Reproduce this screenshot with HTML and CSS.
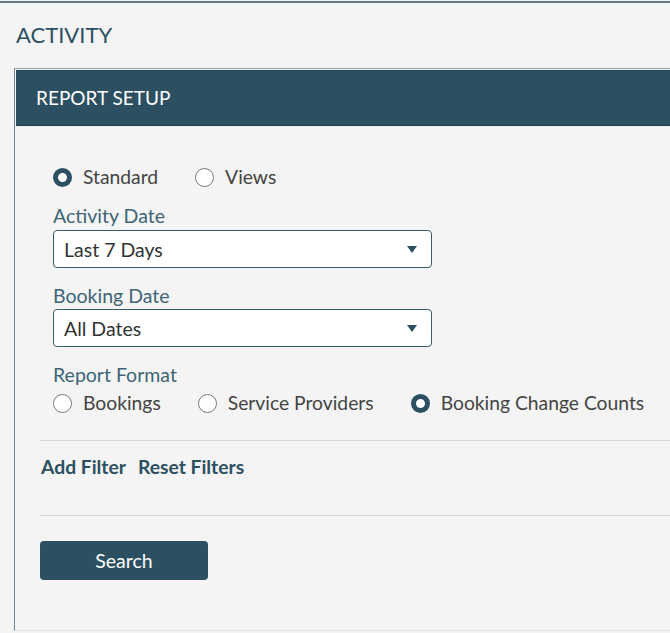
FILE: index.html
```html
<!DOCTYPE html>
<html lang="en">
  <head>
    <meta charset="UTF-8" />
    <meta name="viewport" content="width=device-width, initial-scale=1.0" />
    <title>Activity</title>
    <link rel="stylesheet" href="styles.css">
  </head>
  <body>
    <div class="page">
      <h1 class="page-title">ACTIVITY</h1>

      <!-- Report Setup Panel -->
      <div class="panel">
        <div class="panel-header">REPORT SETUP</div>

        <div class="panel-body">
          <div class="group">
            <div class="radio-row">
              <label class="radio checked"><span class="dot"></span>Standard</label>
              <label class="radio"><span class="dot"></span>Views</label>
            </div>

            <div class="field-label first">Activity Date</div>
            <div class="select">
              <span>Last 7 Days</span>
              <span class="arrow"></span>
            </div>

            <div class="field-label">Booking Date</div>
            <div class="select second">
              <span>All Dates</span>
              <span class="arrow"></span>
            </div>

            <div class="field-label">Report Format</div>
            <div class="radio-row format">
              <label class="radio"><span class="dot"></span>Bookings</label>
              <label class="radio"><span class="dot"></span>Service Providers</label>
              <label class="radio checked"><span class="dot"></span>Booking Change Counts</label>
            </div>
          </div>

          <div class="filters">
            <a href="#" class="link">Add Filter</a>
            <a href="#" class="link">Reset Filters</a>
          </div>

          <div class="actions">
            <button class="btn">Search</button>
          </div>
        </div>
      </div>
    </div>
  </body>
</html>
```

FILE: styles.css
```css
/* General Styling */
body {
  margin: 0;
  padding: 0;
  font-family: "Lato", "Open Sans", sans-serif;
  background-color: #f4f4f4;
  color: #444;
  overflow: hidden;
}

.page {
  margin-top: 1px;
  border-top: 2px solid #627a89;
  height: 630px;
}

.page-title {
  margin: 0;
  padding: 19px 0 0 16px;
  height: 46px;
  font-size: 22px;
  font-weight: 400;
  line-height: 26px;
  color: #2c5062;
}

/* Panel */
.panel {
  margin-left: 14px;
  border-left: 1px solid #6d8491;
  border-top: 1px solid #93a3ad;
  border-bottom: 1px solid #e3e3e3;
}

.panel-header {
  margin: 1px 0 0 1px;
  height: 54px;
  padding-left: 20px;
  background-color: #2c5062;
  border-top: 1px solid #23414f;
  border-bottom: 1px solid #23414f;
  color: #fff;
  font-size: 19px;
  line-height: 54px;
}

.panel-body {
  padding: 0 0 50px 25px;
  border-top: 1px solid #e6eaec;
}

.group {
  padding: 38px 0 25px 13px;
  border-bottom: 1px solid #d9d9d9;
}

/* Radios */
.radio-row {
  display: flex;
  height: 24px;
}

.radio {
  display: flex;
  align-items: center;
  margin-right: 37px;
  font-size: 19.3px;
  line-height: 24px;
  color: #444;
  white-space: nowrap;
}

.dot {
  box-sizing: border-box;
  width: 19px;
  height: 19px;
  margin-right: 11px;
  border: 1.5px solid #7a7a7a;
  border-radius: 50%;
  background: #fff;
}

.radio.checked .dot {
  border: 5px solid #2c5062;
}

.format {
  margin-top: 4px;
}

/* Fields */
.field-label {
  margin-top: 16px;
  font-size: 19.5px;
  line-height: 24px;
  color: #3e6576;
}

.field-label.first {
  margin-top: 15px;
}

.select {
  box-sizing: border-box;
  display: flex;
  align-items: center;
  justify-content: space-between;
  width: 379px;
  height: 38px;
  margin-top: 2px;
  padding: 0 14px 0 10px;
  background: #fff;
  border: 1.5px solid #3b5b6b;
  border-radius: 4px;
  font-size: 19.5px;
  color: #333;
}

.select.second {
  margin-top: 1px;
}

.arrow {
  width: 0;
  height: 0;
  border-left: 5px solid transparent;
  border-right: 5px solid transparent;
  border-top: 7px solid #2c5062;
}

/* Filters */
.filters {
  display: flex;
  gap: 12px;
  padding: 14px 0 36px 1px;
  border-bottom: 1px solid #d9d9d9;
}

.link {
  font-size: 19.3px;
  font-weight: 700;
  line-height: 24px;
  color: #2c5062;
  text-decoration: none;
}

/* Button */
.actions {
  padding-top: 25px;
}

.btn {
  width: 168px;
  height: 39px;
  background-color: #2c5062;
  color: #fff;
  border: none;
  border-radius: 4px;
  font-family: inherit;
  font-size: 19.5px;
  cursor: pointer;
}
```
